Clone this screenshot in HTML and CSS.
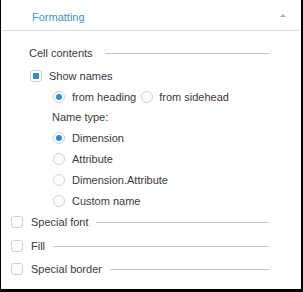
FILE: index.html
```html
<!DOCTYPE html>
<html lang="en">
<head>
  <meta charset="UTF-8" />
  <title>Formatting</title>
  <link rel="stylesheet" href="styles.css">
</head>
<body>
  <div class="panel">
    <div class="panel-header">
      <span class="panel-title">Formatting</span>
      <span class="collapse-arrow"></span>
    </div>

    <div class="panel-body">
      <div class="row row-group">
        <span class="label">Cell contents</span>
        <span class="rule rule-wide"></span>
      </div>

      <div class="row row-check indent-1">
        <span class="checkbox checked"></span>
        <span class="label">Show names</span>
      </div>

      <div class="row row-small indent-2">
        <span class="radio checked"></span>
        <span class="label">from heading</span>
        <span class="radio second"></span>
        <span class="label">from sidehead</span>
      </div>

      <div class="row row-small indent-name">
        <span class="label">Name type:</span>
      </div>

      <div class="row indent-2">
        <span class="radio checked"></span>
        <span class="label">Dimension</span>
      </div>
      <div class="row indent-2">
        <span class="radio"></span>
        <span class="label">Attribute</span>
      </div>
      <div class="row indent-2">
        <span class="radio"></span>
        <span class="label">Dimension.Attribute</span>
      </div>
      <div class="row indent-2">
        <span class="radio"></span>
        <span class="label">Custom name</span>
      </div>

      <div class="row row-check indent-0">
        <span class="checkbox"></span>
        <span class="label">Special font</span>
        <span class="rule"></span>
      </div>
      <div class="row row-tall indent-0 row-fill">
        <span class="checkbox"></span>
        <span class="label">Fill</span>
        <span class="rule"></span>
      </div>
      <div class="row row-tall indent-0">
        <span class="checkbox"></span>
        <span class="label">Special border</span>
        <span class="rule"></span>
      </div>
    </div>
  </div>
</body>
</html>
```

FILE: styles.css
```css
* {
  box-sizing: border-box;
}

body {
  margin: 0;
  background: #000;
  font-family: 'Liberation Sans', Arial, sans-serif;
  font-size: 11px;
  color: #3a3a3a;
}

.panel {
  width: 303px;
  height: 292px;
  background: #fff;
  border-left: 1px solid #000;
  border-right: 2px solid #000;
  border-bottom: 3px solid #000;
}

.panel-header {
  height: 31px;
  margin: 0 1px;
  padding: 3px 14px 0 30px;
  display: flex;
  align-items: center;
  border-bottom: 1px solid #dcdcdc;
}

.panel-title {
  flex: 1;
  color: #3a93d8;
}

.collapse-arrow {
  width: 0;
  height: 0;
  border-left: 3px solid transparent;
  border-right: 3px solid transparent;
  border-bottom: 3px solid #a8a8a8;
  margin-top: -2px;
}

.panel-body {
  padding: 11px 32px 0 0;
}

.row {
  height: 21px;
  display: flex;
  align-items: center;
  white-space: nowrap;
}

.row-group {
  padding-left: 28px;
}

.row-check {
  height: 22px;
}

.row-small {
  height: 20px;
}

.row-tall {
  height: 23px;
}

.row-fill {
  margin-top: 1px;
}

.indent-1 {
  margin-top: 2px;
  padding-left: 29px;
}

.indent-2 {
  padding-left: 52px;
}

.indent-name {
  padding-left: 51px;
}

.indent-0 {
  padding-left: 10px;
}

.rule {
  flex: 1;
  height: 1px;
  background: #c6c6c6;
  margin-left: 8px;
  margin-top: 1px;
}

.rule-wide {
  margin-left: 12px;
}

.checkbox {
  width: 12px;
  height: 12px;
  border: 1px solid #cfcfcf;
  border-radius: 3px;
  margin-right: 7px;
  display: flex;
  align-items: center;
  justify-content: center;
  flex-shrink: 0;
}

.indent-0 .checkbox {
  margin-right: 8px;
}

.checkbox.checked::after {
  content: "";
  width: 6px;
  height: 6px;
  background: #2b8fd8;
}

.radio {
  width: 12px;
  height: 12px;
  border: 1px solid #d2d2d2;
  border-radius: 50%;
  margin-right: 7px;
  display: flex;
  align-items: center;
  justify-content: center;
  flex-shrink: 0;
}

.radio.checked::after {
  content: "";
  width: 6px;
  height: 6px;
  border-radius: 50%;
  background: #2b8fd8;
}

.radio.second {
  margin-left: 5px;
  margin-right: 6px;
}
```
